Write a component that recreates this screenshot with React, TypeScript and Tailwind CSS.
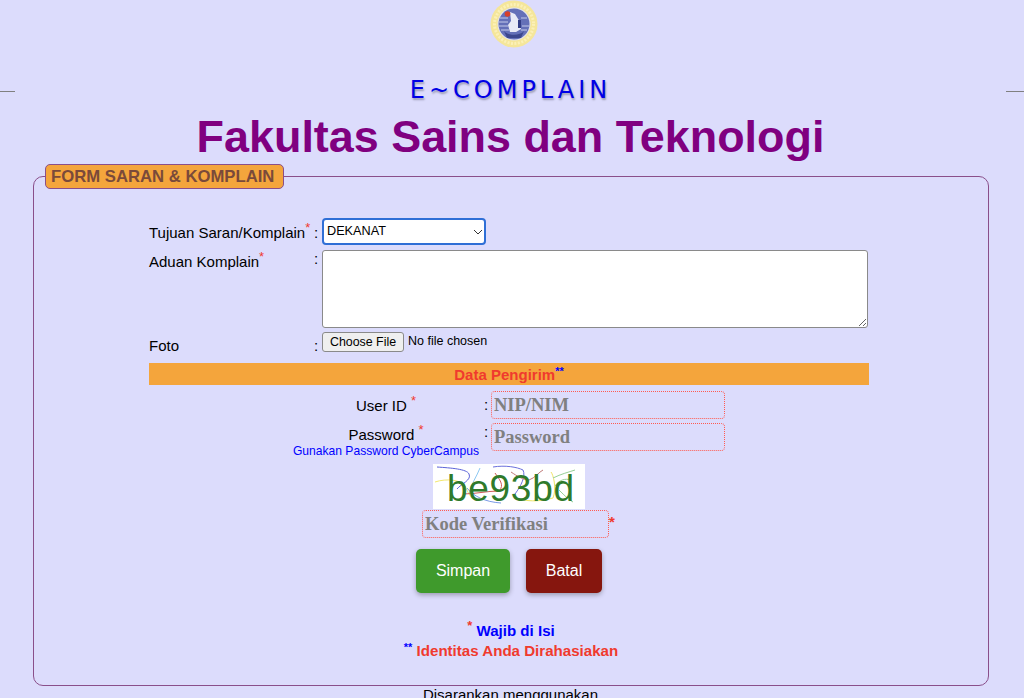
import React from "react";

const Star = ({ className = "text-[#f03a2e]" }: { className?: string }) => (
  <sup className={`text-[13px] leading-none ${className}`}>*</sup>
);

const Logo = () => (
  <svg width="48" height="48" viewBox="0 0 48 48" className="block blur-[0.4px]">
    <circle cx="24" cy="24" r="23.5" fill="#f5e69a" />
    <circle cx="24" cy="24" r="19.5" fill="none" stroke="#fbf0b8" strokeWidth="3" strokeDasharray="2 1.5" />
    <circle cx="24" cy="24" r="16.5" fill="#e4e4ee" />
    <circle cx="24" cy="24" r="15.5" fill="#6470b8" />
    <path d="M10 18h8M9 22h9M9 26h9M11 30h8M31 18h6M32 26h7M31 30h6" stroke="#c3c9ea" strokeWidth="1.2" />
    <path d="M20 12l5 2 5 8 1 7-5 3h-6l-2-7 3-4z" fill="#e8eaf6" />
    <path d="M28 20h3v8h-3z" fill="#323d85" />
    <path d="M14 31c4 5 16 5 20 0l-3 7H17z" fill="#3c478e" />
    <circle cx="17.5" cy="14" r="2.8" fill="#d8402a" />
  </svg>
);

const Captcha = () => (
  <svg width="152" height="45" viewBox="0 0 152 45" className="block bg-white">
    <path d="M4 3c14 1 30 2 32 7 3 6-8 10-12 15" fill="none" stroke="#5a62d8" strokeWidth="1" />
    <path d="M2 18c12-4 26-2 30 4 3 6 4 10 10 14" fill="none" stroke="#f3e86e" strokeWidth="1" />
    <path d="M36 30c2-10 8-18 11-26" fill="none" stroke="#8cc8f2" strokeWidth="1" />
    <path d="M34 24c6 8 18 14 34 15" fill="none" stroke="#7a9ae6" strokeWidth="1" />
    <path d="M30 30c12 0 24-3 36-3 6-6 0-12-4-18" fill="none" stroke="#d05a5a" strokeWidth="1" />
    <path d="M60 3c12-2 24 0 30 3 3 6-2 16-8 24" fill="none" stroke="#6a6fdc" strokeWidth="1" />
    <path d="M78 8c6 4 12 8 18 8 6-2 10-8 14-10" fill="none" stroke="#c07a78" strokeWidth="1" />
    <path d="M90 36c14 2 22 0 30-2 4-10 0-24-2-26" fill="none" stroke="#efe565" strokeWidth="1" />
    <path d="M120 14c8-4 16-6 22-8M126 26c6 6 10 10 14 12M122 22c4-6 10-8 16-6" fill="none" stroke="#96d096" strokeWidth="1" />
    <text x="14" y="37" fontFamily="Liberation Sans, sans-serif" fontSize="37" fill="#2f7a2b" textLength="127">
      be93bd
    </text>
  </svg>
);

const inputClass =
  "block h-7 rounded-[4px] border border-dotted border-[#ff5a50] bg-transparent px-[2px] font-['Liberation_Serif',serif] text-[18.5px] font-bold placeholder:text-[#808080] outline-none";

const App: React.FC = () => {
  return (
    <div className="h-[698px] overflow-hidden bg-[#dcdcfc] font-['Liberation_Sans',sans-serif] text-base text-black">
      <div className="flex justify-center pl-[4px]">
        <Logo />
      </div>

      <div className="mt-[27px] flex items-start justify-between">
        <hr className="mt-[16px] w-[15px] border-[#808080]" />
        <div className="text-center">
          <div className="px-[2px] font-['DejaVu_Sans',sans-serif] text-2xl leading-[30px] tracking-[4px] text-[#0000e6] [text-shadow:1px_2px_2px_#9a9ab4]">
            E~COMPLAIN
          </div>
          <h1 className="mt-[4px] text-[44.9px] font-bold leading-[55px] text-[#800080]">
            Fakultas Sains dan Teknologi
          </h1>
        </div>
        <hr className="mt-[16px] w-[18px] border-[#808080]" />
      </div>

      <fieldset className="mx-[33px] h-[522px] w-[956px] rounded-[10px] border border-[#8a4f8a] px-[11px]">
        <legend className="h-[25px] w-[239px] rounded-[5px] border border-[#8a4f8a] bg-[#f4a53c] pl-[5px] text-[16.7px] font-bold leading-[23px] text-[#7a4a3a]">
          FORM SARAN &amp; KOMPLAIN
        </legend>

        <div className="ml-[104px] mt-[29px] w-[720px]">
          <div className="flex h-[32px] items-start">
            <div className="mt-[6px] w-[165px] text-[15px] leading-[18px]">
              Tujuan Saran/Komplain
              <Star />
            </div>
            <div className="mt-[6px] w-[8px] text-[15px] leading-[18px]">:</div>
            <div className="relative w-[164px]">
              <select className="block h-[27px] w-full appearance-none rounded-[4px] border-2 border-[#2f6fd6] bg-white px-[3px] text-[12.7px] outline-none">
                <option>DEKANAT</option>
              </select>
              <svg width="10" height="6" viewBox="0 0 10 6" className="absolute right-[3px] top-[11px]" fill="none" stroke="#333" strokeWidth="1">
                <path d="M1 1l4 4 4-4" />
              </svg>
            </div>
          </div>

          <div className="flex h-[82px] items-start">
            <div className="mt-[1px] w-[165px] text-[15px] leading-[22px]">
              Aduan Komplain
              <Star />
            </div>
            <div className="w-[8px] text-[15px] leading-[18px]">:</div>
            <textarea className="h-[78px] w-[546px] rounded-[3px] border border-[#8a8a8a] bg-white" />
          </div>

          <div className="flex h-[31px] items-start">
            <div className="mt-[5px] w-[165px] text-[15px] leading-[18px]">Foto</div>
            <div className="mt-[5px] w-[8px] text-[15px] leading-[18px]">:</div>
            <button className="h-[20px] w-[82px] rounded-[3px] border border-[#8a8a8a] bg-[#efefef] text-[12.4px] leading-[18px]">
              Choose File
            </button>
            <span className="ml-[4px] text-[12.5px] leading-[19px]">No file chosen</span>
          </div>

          <div className="h-[22px] bg-[#f4a53c] text-center text-[15px] font-bold leading-[24px] text-[#f03a2e]">
            Data Pengirim
            <sup className="text-[11px] leading-none text-[#0000ff]">**</sup>
          </div>

          <div className="mt-[6px] flex h-[32px] items-start">
            <div className="mt-[6px] w-[335px] pl-[139px] text-center text-[15px] leading-[18px]">
              User ID <Star />
            </div>
            <div className="mt-[5px] w-[7px] text-[15px] leading-[18px]">:</div>
            <input placeholder="NIP/NIM" className={`${inputClass} w-[234px]`} />
          </div>

          <div className="flex h-[41px] items-start">
            <div className="w-[335px] pl-[139px] text-center">
              <div className="mt-[3px] text-[15px] leading-[18px]">
                Password <Star />
              </div>
              <div className="whitespace-nowrap text-[12.1px] leading-[14px] text-[#0000ff]">
                Gunakan Password CyberCampus
              </div>
            </div>
            <div className="w-[7px] text-[15px] leading-[18px]">:</div>
            <input placeholder="Password" className={`${inputClass} w-[234px]`} />
          </div>

          <div className="mb-[1px] ml-[284px]">
            <Captcha />
          </div>

          <div className="ml-[273px] flex items-start">
            <input placeholder="Kode Verifikasi" className={`${inputClass} w-[187px]`} />
            <span className="mt-[4px] text-[15px] font-bold leading-none text-[#f03a2e]">*</span>
          </div>

          <div className="ml-[267px] mt-[11px] flex gap-4">
            <button className="h-[44px] w-[94px] rounded-[5px] bg-[#3f9a2c] text-base text-white shadow-[0_2px_5px_rgba(0,0,0,0.3)]">
              Simpan
            </button>
            <button className="h-[44px] w-[76px] rounded-[5px] bg-[#86160e] text-base text-white shadow-[0_2px_5px_rgba(0,0,0,0.3)]">
              Batal
            </button>
          </div>

          <div className="mt-[28px] pl-[4px] text-center text-[15.1px] font-bold leading-[20px]">
            <div className="text-[#0000ff]">
              <Star /> Wajib di Isi
            </div>
            <div className="text-[#f03a2e]">
              <sup className="text-[11px] leading-none text-[#0000ff]">**</sup> Identitas Anda Dirahasiakan
            </div>
          </div>
        </div>
      </fieldset>

      <div className="pr-[3px] text-center text-[15px] leading-[18px]">Disarankan menggunakan</div>
    </div>
  );
};

export default App;
